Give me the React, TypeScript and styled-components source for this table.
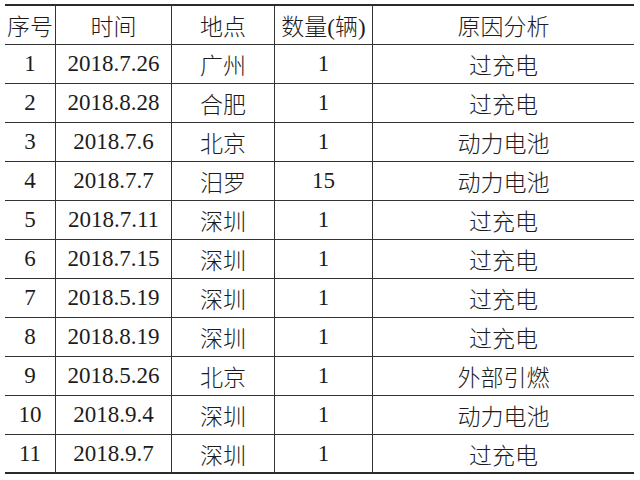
import React from 'react';
import styled, { createGlobalStyle } from 'styled-components';

const GlobalStyle = createGlobalStyle`
    html, body {
        margin: 0;
        padding: 0;
        background: #fff;
    }
`;

interface Incident {
    no: number;
    date: string;
    place: string;
    count: number;
    reason: string;
}

const incidents: Incident[] = [
    { no: 1, date: '2018.7.26', place: '广州', count: 1, reason: '过充电' },
    { no: 2, date: '2018.8.28', place: '合肥', count: 1, reason: '过充电' },
    { no: 3, date: '2018.7.6', place: '北京', count: 1, reason: '动力电池' },
    { no: 4, date: '2018.7.7', place: '汨罗', count: 15, reason: '动力电池' },
    { no: 5, date: '2018.7.11', place: '深圳', count: 1, reason: '过充电' },
    { no: 6, date: '2018.7.15', place: '深圳', count: 1, reason: '过充电' },
    { no: 7, date: '2018.5.19', place: '深圳', count: 1, reason: '过充电' },
    { no: 8, date: '2018.8.19', place: '深圳', count: 1, reason: '过充电' },
    { no: 9, date: '2018.5.26', place: '北京', count: 1, reason: '外部引燃' },
    { no: 10, date: '2018.9.4', place: '深圳', count: 1, reason: '动力电池' },
    { no: 11, date: '2018.9.7', place: '深圳', count: 1, reason: '过充电' },
];

const headers = ['序号', '时间', '地点', '数量(辆)', '原因分析'];

export default function App() {
    return (
        <>
            <GlobalStyle />
            <Table>
                {headers.map((h, i) => (
                    <Cell key={h} last={i === headers.length - 1}>{h}</Cell>
                ))}
                {incidents.map((row, r) => {
                    const bottom = r === incidents.length - 1;
                    return (
                        <React.Fragment key={row.no}>
                            <Cell bottom={bottom}>{row.no}</Cell>
                            <Cell bottom={bottom}>{row.date}</Cell>
                            <Cell bottom={bottom}>{row.place}</Cell>
                            <Cell bottom={bottom}>{row.count}</Cell>
                            <Cell bottom={bottom} last>{row.reason}</Cell>
                        </React.Fragment>
                    );
                })}
            </Table>
        </>
    );
}

const Table = styled.div`
    margin: 4px 0 0 5px;
    width: 629px;
    display: grid;
    grid-template-columns: 51px 116px 103px 98px 261px;
    grid-auto-rows: 39px;
    border-top: 2px solid #2b2b2b;
    font-family: "Liberation Serif", "Noto Sans CJK SC", serif;
    font-size: 23px;
    color: #1c1c1c;
`;

const Cell = styled.div<{ last?: boolean; bottom?: boolean }>`
    box-sizing: border-box;
    display: flex;
    align-items: center;
    justify-content: center;
    white-space: nowrap;
    font-weight: 300;
    border-right: ${(p) => (p.last ? 'none' : '1px solid #333')};
    border-bottom: ${(p) => (p.bottom ? '2px solid #2b2b2b' : '1px solid #333')};
    padding-top: ${(p) => (p.bottom ? '1px' : '0')};
`;
